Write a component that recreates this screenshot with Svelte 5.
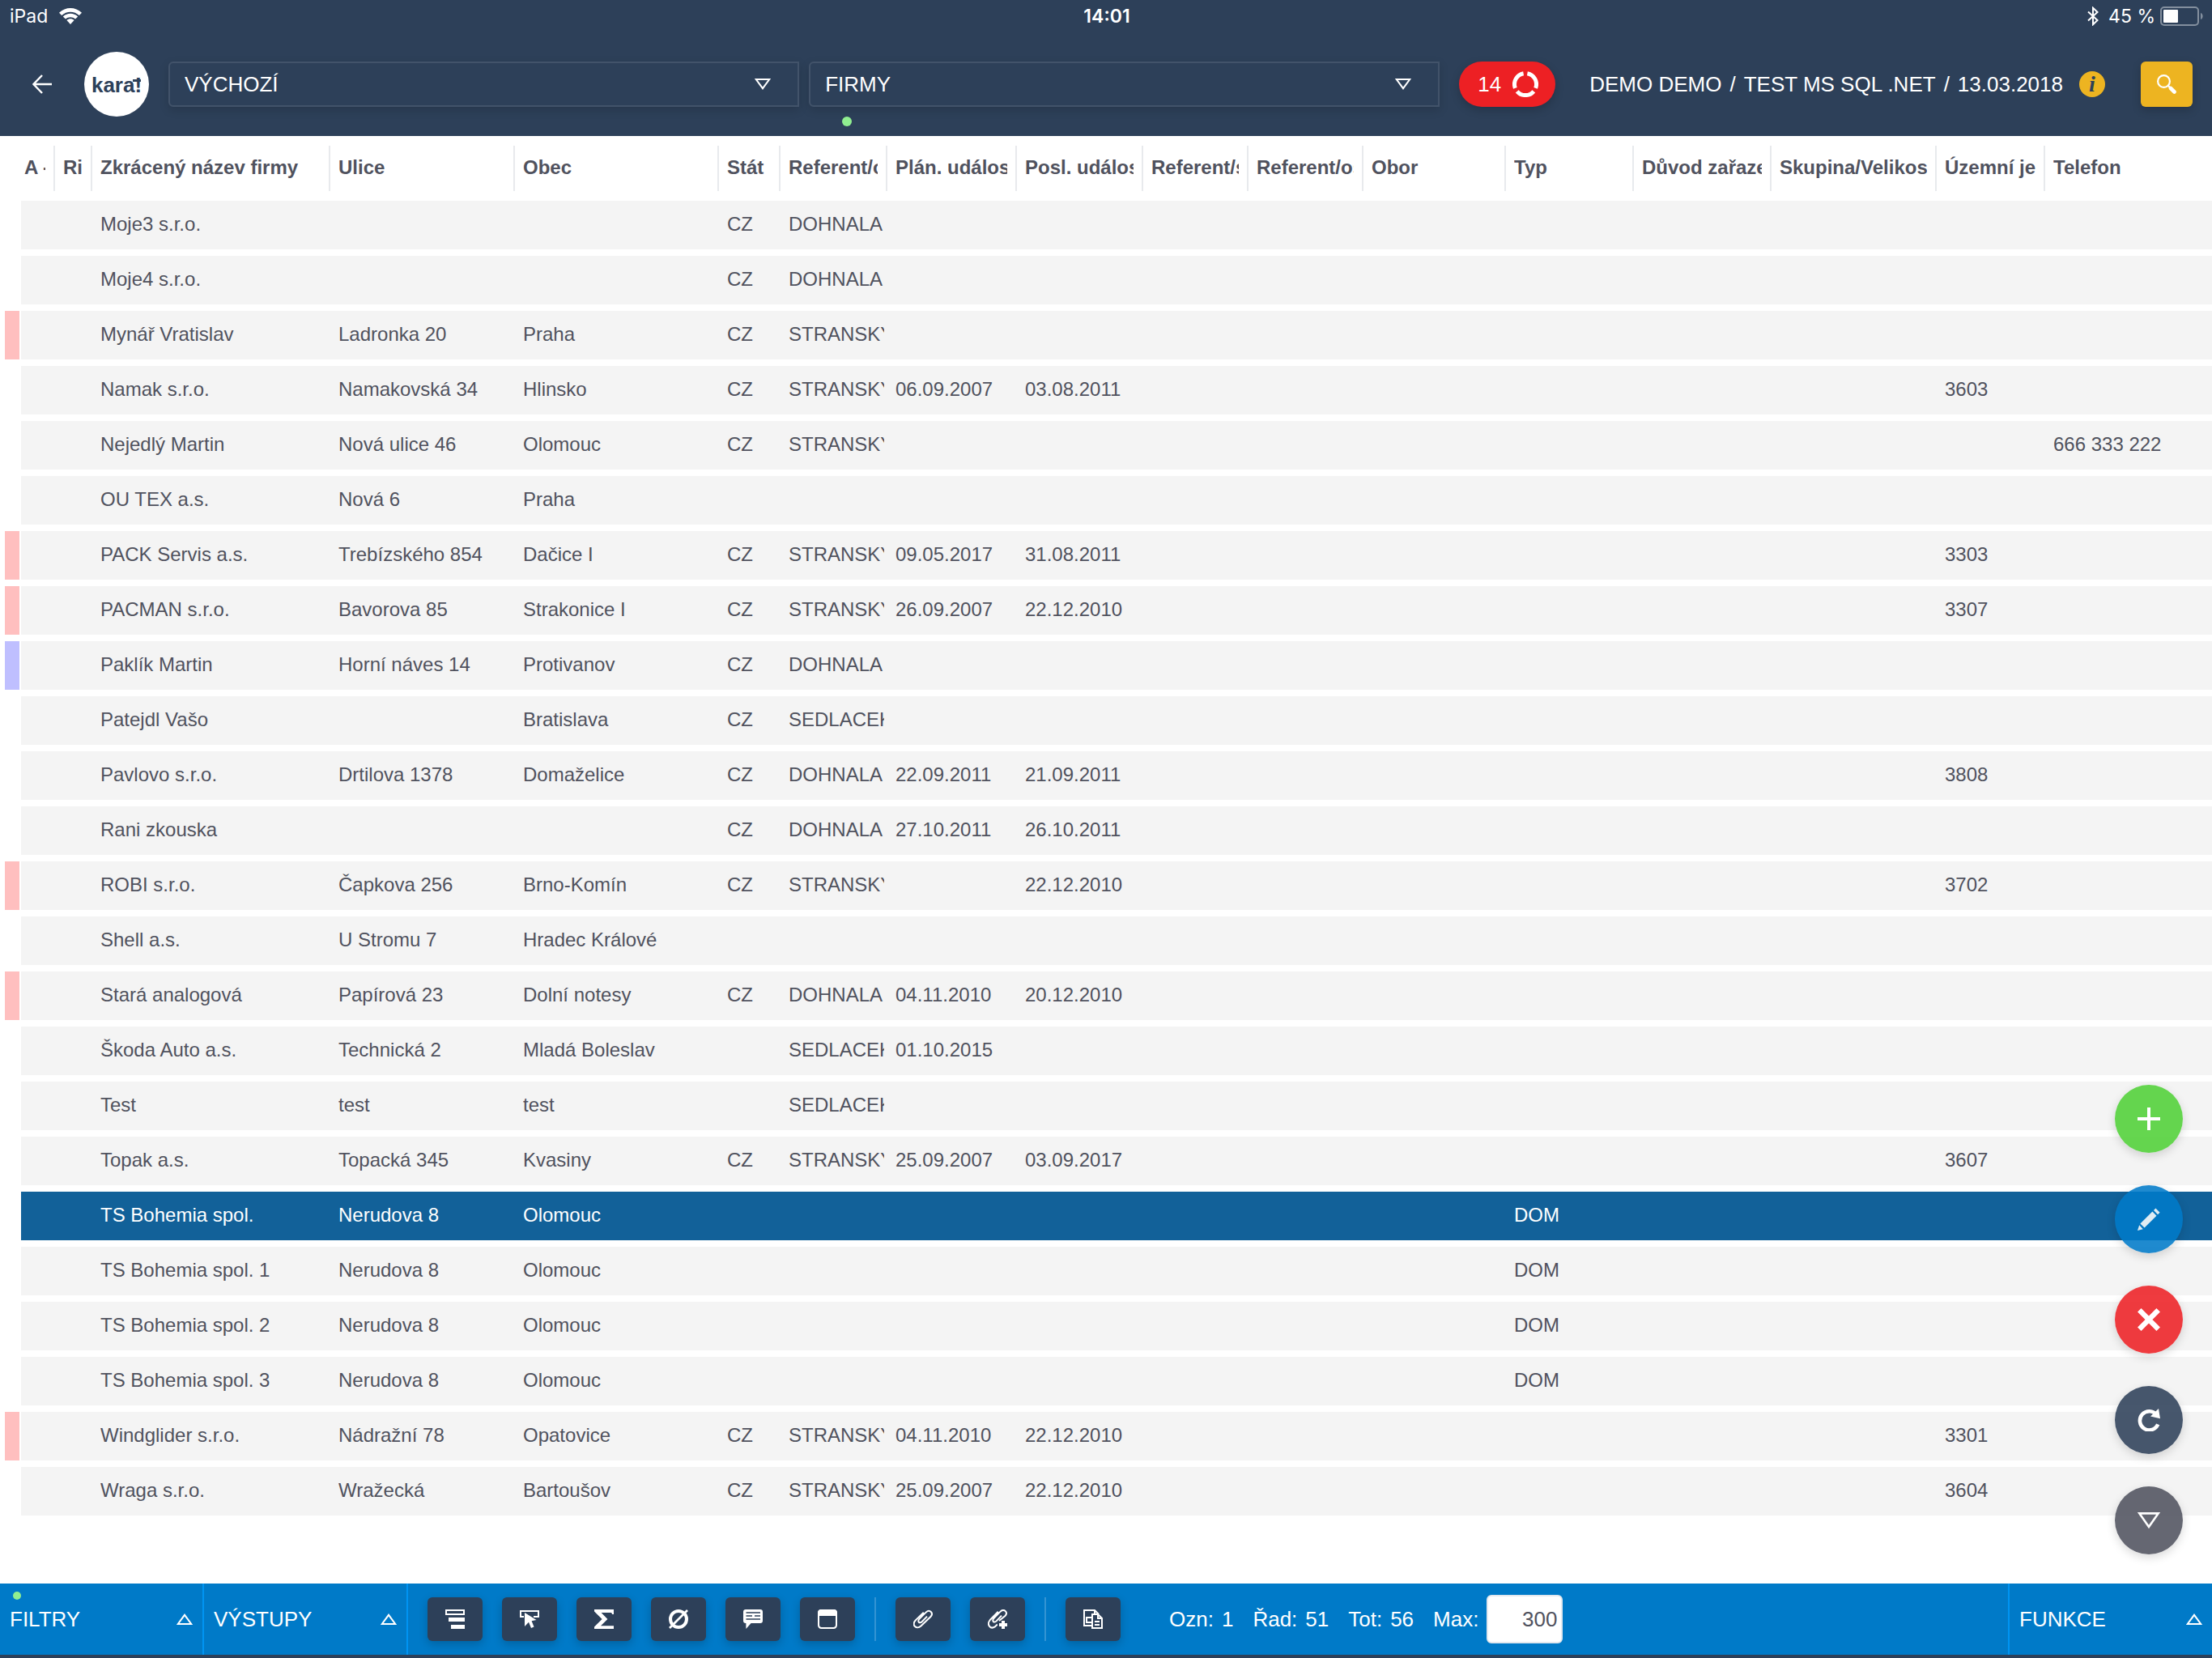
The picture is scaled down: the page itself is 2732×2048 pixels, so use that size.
<script lang="ts">
  type Row = {
    mark?: "red" | "violet";
    selected?: boolean;
    cells: Record<string, string>;
  };

  const columns = [
    { key: "akt", label: "A -", width: 42 },
    { key: "riz", label: "Ri", width: 46 },
    { key: "name", label: "Zkrácený název firmy", width: 294 },
    { key: "street", label: "Ulice", width: 228 },
    { key: "city", label: "Obec", width: 252 },
    { key: "state", label: "Stát", width: 76 },
    { key: "ref", label: "Referent/o", width: 132 },
    { key: "plan", label: "Plán. událos", width: 160 },
    { key: "last", label: "Posl. událos", width: 156 },
    { key: "refService", label: "Referent/s", width: 130 },
    { key: "refPerson", label: "Referent/os", width: 142 },
    { key: "field", label: "Obor", width: 176 },
    { key: "type", label: "Typ", width: 158 },
    { key: "reason", label: "Důvod zařaze", width: 170 },
    { key: "group", label: "Skupina/Velikos", width: 204 },
    { key: "unit", label: "Územní je", width: 134 },
    { key: "phone", label: "Telefon", width: 0 },
  ];

  function row(
    name: string,
    street = "",
    city = "",
    state = "",
    ref = "",
    plan = "",
    last = "",
    unit = "",
    more: Partial<Row> = {},
    extra: Record<string, string> = {}
  ): Row {
    return { ...more, cells: { name, street, city, state, ref, plan, last, unit, ...extra } };
  }

  const rows: Row[] = [
    row("Moje3 s.r.o.", "", "", "CZ", "DOHNALA"),
    row("Moje4 s.r.o.", "", "", "CZ", "DOHNALA"),
    row("Mynář Vratislav", "Ladronka 20", "Praha", "CZ", "STRANSKY", "", "", "", { mark: "red" }),
    row("Namak s.r.o.", "Namakovská 34", "Hlinsko", "CZ", "STRANSKY", "06.09.2007", "03.08.2011", "3603"),
    row("Nejedlý Martin", "Nová ulice 46", "Olomouc", "CZ", "STRANSKY", "", "", "", {}, { phone: "666 333 222" }),
    row("OU TEX a.s.", "Nová 6", "Praha"),
    row("PACK Servis a.s.", "Trebízského 854", "Dačice I", "CZ", "STRANSKY", "09.05.2017", "31.08.2011", "3303", { mark: "red" }),
    row("PACMAN s.r.o.", "Bavorova 85", "Strakonice I", "CZ", "STRANSKY", "26.09.2007", "22.12.2010", "3307", { mark: "red" }),
    row("Paklík Martin", "Horní náves 14", "Protivanov", "CZ", "DOHNALA", "", "", "", { mark: "violet" }),
    row("Patejdl Vašo", "", "Bratislava", "CZ", "SEDLACEK"),
    row("Pavlovo s.r.o.", "Drtilova 1378", "Domaželice", "CZ", "DOHNALA", "22.09.2011", "21.09.2011", "3808"),
    row("Rani zkouska", "", "", "CZ", "DOHNALA", "27.10.2011", "26.10.2011"),
    row("ROBI s.r.o.", "Čapkova 256", "Brno-Komín", "CZ", "STRANSKY", "", "22.12.2010", "3702", { mark: "red" }),
    row("Shell a.s.", "U Stromu 7", "Hradec Králové"),
    row("Stará analogová", "Papírová 23", "Dolní notesy", "CZ", "DOHNALA", "04.11.2010", "20.12.2010", "", { mark: "red" }),
    row("Škoda Auto a.s.", "Technická 2", "Mladá Boleslav", "", "SEDLACEK", "01.10.2015"),
    row("Test", "test", "test", "", "SEDLACEK"),
    row("Topak a.s.", "Topacká 345", "Kvasiny", "CZ", "STRANSKY", "25.09.2007", "03.09.2017", "3607"),
    row("TS Bohemia spol.", "Nerudova 8", "Olomouc", "", "", "", "", "", { selected: true }, { type: "DOM" }),
    row("TS Bohemia spol. 1", "Nerudova 8", "Olomouc", "", "", "", "", "", {}, { type: "DOM" }),
    row("TS Bohemia spol. 2", "Nerudova 8", "Olomouc", "", "", "", "", "", {}, { type: "DOM" }),
    row("TS Bohemia spol. 3", "Nerudova 8", "Olomouc", "", "", "", "", "", {}, { type: "DOM" }),
    row("Windglider s.r.o.", "Nádražní 78", "Opatovice", "CZ", "STRANSKY", "04.11.2010", "22.12.2010", "3301", { mark: "red" }),
    row("Wraga s.r.o.", "Wražecká", "Bartoušov", "CZ", "STRANSKY", "25.09.2007", "22.12.2010", "3604"),
  ];

  const user = ["DEMO DEMO", "TEST MS SQL .NET", "13.03.2018"];

  const stats = [
    { label: "Ozn:", value: 1 },
    { label: "Řad:", value: 51 },
    { label: "Tot:", value: 56 },
  ];

  let max = $state("300");
</script>

{#snippet down()}
  <svg class="triangle" width="20" height="14" viewBox="0 0 20 14" aria-hidden="true">
    <path d="M1.8 1H18.2L10 12.2Z" />
  </svg>
{/snippet}

{#snippet up()}
  <svg class="triangle" width="20" height="14" viewBox="0 0 20 14" aria-hidden="true">
    <path d="M1.8 13H18.2L10 1.8Z" />
  </svg>
{/snippet}

<div class="app">
  <header>
    <div class="status">
      <div class="status-left">
        <span>iPad</span>
        <svg width="28" height="20" viewBox="0 0 28 20" aria-label="Wi-Fi">
          <path d="M0 5.8C8-1.9 20-1.9 28 5.8L24.8 9C18.6 3.2 9.4 3.2 3.2 9Z" />
          <path d="M4.8 10.4C10 5.4 18 5.4 23.2 10.4L20 13.6C16.6 10.4 11.4 10.4 8 13.6Z" />
          <path d="M9.4 15C12 12.6 16 12.6 18.6 15L14 20Z" />
        </svg>
      </div>
      <time>14:01</time>
      <div class="status-right">
        <svg width="14" height="24" viewBox="0 0 14 24" aria-label="Bluetooth">
          <path d="M1 6.5L12.5 17L7 22.3V1.7L12.5 7L1 17.5" fill="none" stroke="#fff" stroke-width="2" />
        </svg>
        <span class="charge">45 %</span>
        <svg width="54" height="24" viewBox="0 0 54 24" aria-label="Baterie">
          <rect x="1" y="1" width="46" height="22" rx="4" fill="none" stroke="#838f9e" stroke-width="2" />
          <rect x="4" y="4" width="18" height="16" rx="1" />
          <path d="M50 8C53.4 9 53.4 15 50 16Z" fill="#838f9e" />
        </svg>
      </div>
    </div>

    <div class="bar">
      <button class="back" aria-label="Zpět">
        <svg width="24" height="24" viewBox="0 0 24 24">
          <path d="M12 1L1.5 12L12 23M1.5 12H24" fill="none" stroke="#fff" stroke-width="2.4" />
        </svg>
      </button>
      <a class="logo" href="#home" aria-label="karat">
        <svg width="80" height="80" viewBox="0 0 80 80">
          <circle cx="40" cy="40" r="40" />
          <text x="40" y="50" text-anchor="middle">kara!</text>
          <path d="M60 34H70V37H60Z" fill="#2d4059" />
        </svg>
      </a>
      <div class="selects">
        <label class="select">
          <select aria-label="Pohled">
            <option>VÝCHOZÍ</option>
          </select>
          {@render down()}
        </label>
        <label class="select">
          <select aria-label="Agenda">
            <option>FIRMY</option>
          </select>
          {@render down()}
          <span class="active-dot"></span>
        </label>
      </div>
      <button class="pill">
        14
        <svg width="32" height="32" viewBox="0 0 32 32" aria-hidden="true">
          <g fill="none" stroke="#fff" stroke-width="5">
            <path d="M18.4 2.7A13.5 13.5 0 0 1 28.6 20.9" />
            <path d="M26.3 24.8A13.5 13.5 0 0 1 5.7 24.8" />
            <path d="M3.4 20.9A13.5 13.5 0 0 1 13.6 2.7" />
          </g>
        </svg>
      </button>
      <div class="user">
        {#each user as part, i}
          {#if i > 0}<span>/</span>{/if}
          <span>{part}</span>
        {/each}
      </div>
      <button class="info" aria-label="Informace">i</button>
      <button class="search" aria-label="Hledat">
        <svg width="24" height="24" viewBox="0 0 24 24">
          <circle cx="8.5" cy="8.5" r="7.4" fill="none" stroke="#fff" stroke-width="2.2" />
          <path d="M14 14L16.5 16.5" stroke="#fff" stroke-width="2.4" />
          <path d="M17 17L21.5 21.5" stroke="#fff" stroke-width="4.6" stroke-linecap="round" />
        </svg>
      </button>
    </div>
  </header>

  <main>
    <table>
      <colgroup>
        <col style="width: 26px" />
        {#each columns as col}
          <col style={col.width ? `width: ${col.width}px` : undefined} />
        {/each}
      </colgroup>
      <thead>
        <tr>
          <td></td>
          {#each columns as col}
            <th scope="col"><div><span>{col.label}</span></div></th>
          {/each}
        </tr>
      </thead>
      <tbody>
        {#each rows as r}
          <tr class:selected={r.selected}>
            <td class="mark {r.mark ?? ''}"><div></div></td>
            {#each columns as col}
              <td><div>{r.cells[col.key] ?? ""}</div></td>
            {/each}
          </tr>
        {/each}
      </tbody>
    </table>
  </main>

  <div class="fabs">
    <button class="fab add" aria-label="Přidat">
      <svg width="28" height="28" viewBox="0 0 28 28"><path d="M14 0V28M0 14H28" stroke="#fff" stroke-width="4" /></svg>
    </button>
    <button class="fab edit" aria-label="Upravit">
      <svg width="28" height="28" viewBox="0 0 28 28">
        <g fill="#e0ecf3">
          <path d="M22.4 0.6L27.6 5.8L25 8.2L20 3Z" />
          <path d="M18.4 4.6L23.5 9.8L8.6 24.6L3.4 19.4Z" />
          <path d="M2.2 21.2L6.8 26.2L0 28Z" />
        </g>
      </svg>
    </button>
    <button class="fab delete" aria-label="Smazat">
      <svg width="28" height="28" viewBox="0 0 28 28"><path d="M2.3 2.3L25.7 25.7M25.7 2.3L2.3 25.7" stroke="#fff" stroke-width="6.4" /></svg>
    </button>
    <button class="fab reload" aria-label="Obnovit">
      <svg width="28" height="28" viewBox="0 0 28 28">
        <path d="M23.6 7.6A11.6 11.6 0 1 0 25.2 19.4" fill="none" stroke="#fff" stroke-width="4.6" />
        <path d="M26 0L28 12.2L16 9.6Z" />
      </svg>
    </button>
    <button class="fab more" aria-label="Další">
      <svg width="28" height="28" viewBox="0 0 28 28"><path d="M2.4 5.4H25.6L14 22Z" fill="none" stroke="#fff" stroke-width="2.6" /></svg>
    </button>
  </div>

  <footer>
    <button class="menu">
      <span class="menu-dot"></span>
      FILTRY {@render up()}
    </button>
    <button class="menu">VÝSTUPY {@render up()}</button>

    <div class="tools">
      <button class="tool" aria-label="Řádky">
        <svg width="24" height="24" viewBox="0 0 24 24">
          <rect x="1" y="1" width="22" height="5" fill="none" stroke="#fff" stroke-width="2" />
          <rect x="4" y="10" width="20" height="5" />
          <rect x="7" y="19" width="17" height="5" />
        </svg>
      </button>
      <button class="tool" aria-label="Výběr">
        <svg width="24" height="24" viewBox="0 0 24 24">
          <path d="M5 9H1V2H23V9H17" fill="none" stroke="#fff" stroke-width="2" />
          <path d="M6 4L20.5 13L14.6 14.2L17.5 21.5L14 23L11 15.8L6 21Z" />
        </svg>
      </button>
      <button class="tool" aria-label="Součet">
        <svg width="24" height="24" viewBox="0 0 24 24">
          <path d="M0 0H24V6H22C22 4.6 21 4 20 4H8.6L16.4 12L8 20.2H24V24H0V21.6L9.6 12L0 2.4Z" />
        </svg>
      </button>
      <button class="tool" aria-label="Průměr">
        <svg width="24" height="24" viewBox="0 0 24 24">
          <circle cx="12" cy="12" r="10" fill="none" stroke="#fff" stroke-width="4" />
          <path d="M1 23L23 1" stroke="#fff" stroke-width="2.6" />
        </svg>
      </button>
      <button class="tool" aria-label="Poznámka">
        <svg width="24" height="24" viewBox="0 0 24 24">
          <path d="M3 0H21A3 3 0 0 1 24 3V14A3 3 0 0 1 21 17H9.6L3.4 24V17H3A3 3 0 0 1 0 14V3A3 3 0 0 1 3 0Z" />
          <path d="M3.5 4H21M3.5 8H11M14 8H21M3.5 12H21" stroke="#2d4059" stroke-width="1.6" />
        </svg>
      </button>
      <button class="tool" aria-label="Okno">
        <svg width="24" height="24" viewBox="0 0 24 24">
          <rect x="1" y="1" width="22" height="22" rx="3.4" fill="none" stroke="#fff" stroke-width="2" />
          <path d="M4 0H20A4 4 0 0 1 24 4V8H0V4A4 4 0 0 1 4 0Z" />
        </svg>
      </button>
      <span class="divider"></span>
      <button class="tool" aria-label="Přílohy">
        <svg width="24" height="24" viewBox="0 0 24 24">
          <path
            d="M12.8 3.8L2.8 13.4C-2.6 19.4 4 25.4 9.4 20.4L21.4 9C25.4 4.6 20.2-0.6 15.8 3.4L7.6 11.6C4.6 15 7.6 18 10.6 15.2L17 8.6"
            fill="none"
            stroke="#fff"
            stroke-width="2"
          />
        </svg>
      </button>
      <button class="tool" aria-label="Přidat přílohu">
        <svg width="24" height="24" viewBox="0 0 24 24">
          <path
            d="M12.8 2.8L2.8 13C-2 19 3.6 25 8.8 21.4L11.8 18.6M14 14L21.4 8C25.4 3.6 20.2-1.4 15.8 2.4L7.6 10.8C4.6 14.2 7.6 17.4 10.6 14.4L17 7.6"
            fill="none"
            stroke="#fff"
            stroke-width="2"
          />
          <path d="M19 14V24M14 19H24" stroke="#fff" stroke-width="4" />
        </svg>
      </button>
      <span class="divider"></span>
      <button class="tool" aria-label="Kopírovat">
        <svg width="24" height="24" viewBox="0 0 24 24">
          <g fill="none" stroke="#fff" stroke-width="2">
            <path d="M10 20H1V1H14L19 6M14 1V6M3 10H11M10 16H4V10" />
            <path d="M11 6H18L23 11V23H11Z" fill="#2d4059" />
            <path d="M18 6V11H23M14 15H20M14 19H20" />
          </g>
        </svg>
      </button>
    </div>

    <div class="stats">
      {#each stats as s}
        <span class="stat"><span>{s.label}</span><span>{s.value}</span></span>
      {/each}
      <div class="stat">
        <label for="max">Max:</label>
        <input id="max" type="text" inputmode="numeric" bind:value={max} />
      </div>
    </div>

    <button class="menu functions">FUNKCE {@render up()}</button>
  </footer>
</div>

<style>
  :global(body) {
    background: #fff;
  }

  .app {
    min-height: 100vh;
    display: flex;
    flex-direction: column;
    font-family: "Liberation Sans", Arial, sans-serif;
    font-size: 24px;
    color: #50525e;
  }

  button {
    border: 0;
    padding: 0;
    margin: 0;
    background: none;
    font: inherit;
    color: inherit;
    cursor: pointer;
  }

  svg {
    display: block;
    flex: none;
    fill: #fff;
  }

  .triangle {
    fill: none;
    stroke: #fff;
    stroke-width: 2;
  }

  header {
    background: #2d4059;
    color: #fff;
  }

  .status {
    display: grid;
    grid-template-columns: 1fr auto 1fr;
    align-items: center;
    height: 40px;
    padding: 0 10px 0 12px;
    font-family: Inter, sans-serif;
    font-size: 23px;
  }

  .status time {
    font-weight: 600;
  }

  .status-left {
    display: flex;
    align-items: center;
    gap: 14px;
  }

  .status-right {
    display: flex;
    align-items: center;
    justify-content: flex-end;
    gap: 6px;
  }

  .charge {
    padding-left: 6px;
  }

  .bar {
    display: flex;
    align-items: center;
    height: 128px;
    padding: 0 24px 0 40px;
    font-size: 26px;
  }

  .logo {
    margin: 0 24px 0 40px;
  }

  .logo text {
    fill: #2d4059;
    font-size: 26px;
    font-weight: 700;
  }

  .selects {
    flex: 1;
    display: flex;
    gap: 12px;
  }

  .select {
    flex: 1;
    display: grid;
    align-items: center;
    position: relative;
  }

  .select > :global(*) {
    grid-area: 1 / 1;
  }

  .select > :global(.triangle) {
    justify-self: end;
    margin-right: 35px;
    pointer-events: none;
  }

  select {
    appearance: none;
    width: 100%;
    height: 56px;
    padding: 0 64px 0 18px;
    border: 2px solid #42536a;
    border-radius: 6px 0 0 6px;
    background: transparent;
    box-shadow: 0 4px 12px rgba(0, 0, 0, 0.15);
    font: inherit;
    color: #fff;
  }

  .active-dot {
    position: absolute;
    left: 41px;
    top: 68px;
    width: 12px;
    height: 12px;
    border-radius: 50%;
    background: #90ee90;
  }

  .pill {
    display: flex;
    align-items: center;
    gap: 14px;
    height: 56px;
    margin: 0 42px 0 24px;
    padding: 0 21px 0 23px;
    border-radius: 28px;
    background: #ed2024;
    box-shadow: 0 4px 12px rgba(0, 0, 0, 0.2);
  }

  .user {
    display: flex;
    gap: 10px;
    white-space: nowrap;
  }

  .info {
    width: 32px;
    height: 32px;
    margin: 0 44px 0 20px;
    border-radius: 50%;
    background: #edb421;
    color: #2d4059;
    font: italic 700 28px/32px "Liberation Serif", serif;
  }

  .search {
    display: grid;
    place-items: center;
    width: 64px;
    height: 56px;
    border-radius: 6px;
    background: #edb421;
    box-shadow: 0 4px 12px rgba(0, 0, 0, 0.2);
  }

  table {
    width: 100%;
    table-layout: fixed;
    border-collapse: separate;
    border-spacing: 0 8px;
  }

  th,
  td {
    padding: 0;
    text-align: left;
  }

  th {
    height: 64px;
  }

  th div {
    height: 56px;
    padding: 0 10px;
    border-right: 2px solid #e8eaed;
    line-height: 54px;
  }

  th:nth-child(2) div {
    padding-left: 4px;
  }

  th:last-child div {
    border-right: 0;
  }

  th span {
    display: block;
    overflow: hidden;
    white-space: nowrap;
  }

  tbody td {
    height: 60px;
    padding: 0 4px 0 10px;
    background: #f4f4f4;
  }

  tbody td div {
    height: 60px;
    line-height: 58px;
    overflow: hidden;
    white-space: nowrap;
  }

  tbody td.mark {
    padding: 0 2px 0 6px;
    background: none;
  }

  .mark.red div {
    background: #ffbfbf;
  }

  .mark.violet div {
    background: #bfbfff;
  }

  .selected td {
    background: #126199;
    color: #fff;
  }

  .fabs {
    position: fixed;
    right: 36px;
    bottom: 128px;
    display: flex;
    flex-direction: column;
    gap: 40px;
  }

  .fab {
    display: grid;
    place-items: center;
    width: 84px;
    height: 84px;
    border-radius: 50%;
    box-shadow: 0 4px 12px rgba(0, 0, 0, 0.15);
  }

  .add {
    background: rgba(80, 208, 55, 0.88);
  }

  .edit {
    background: rgba(0, 122, 200, 0.88);
  }

  .delete {
    background: rgba(237, 32, 36, 0.88);
  }

  .reload {
    background: rgba(45, 64, 89, 0.88);
  }

  .more {
    background: rgba(80, 82, 94, 0.88);
  }

  footer {
    display: flex;
    align-items: center;
    height: 88px;
    margin-top: auto;
    border-bottom: 4px solid #2d4059;
    background: #007ac8;
    color: #fff;
    font-size: 26px;
  }

  .menu {
    position: relative;
    display: flex;
    align-items: center;
    justify-content: space-between;
    width: 252px;
    height: 100%;
    padding: 0 12px;
    border-right: 2px solid #0094f2;
  }

  .menu-dot {
    position: absolute;
    left: 16px;
    top: 10px;
    width: 10px;
    height: 10px;
    border-radius: 50%;
    background: #90ee90;
  }

  .functions {
    margin-left: auto;
    border-right: 0;
    border-left: 2px solid #0094f2;
  }

  .tools {
    display: flex;
    gap: 24px;
    margin-left: 24px;
  }

  .tool {
    display: grid;
    place-items: center;
    width: 68px;
    height: 54px;
    border-radius: 6px;
    background: #2d4059;
    box-shadow: 0 4px 12px rgba(0, 0, 0, 0.2);
  }

  .divider {
    width: 2px;
    background: #3394d3;
  }

  .stats {
    display: flex;
    align-items: center;
    gap: 24px;
    margin-left: 60px;
  }

  .stat {
    display: flex;
    align-items: center;
    gap: 10px;
  }

  .stats input {
    box-sizing: border-box;
    width: 94px;
    height: 60px;
    padding: 0 5px;
    border: 2px solid #e3e8ee;
    border-radius: 6px;
    background: #fff;
    font: inherit;
    color: #50525e;
    text-align: right;
  }
</style>
